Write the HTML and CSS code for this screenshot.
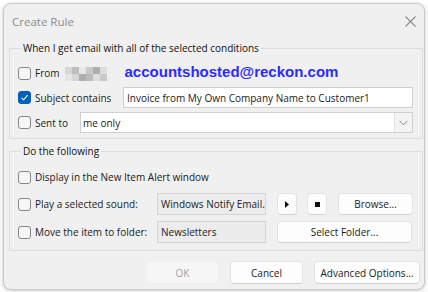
FILE: index.html
```html
<!DOCTYPE html>
<html>
<head>
<meta charset="utf-8">
<title>Create Rule</title>
<link rel="stylesheet" href="styles.css">
</head>
<body>
<div class="window">
  <div class="titlebar">
    <span class="title">Create Rule</span>
    <svg class="close" width="11" height="11" viewBox="0 0 11 11"><path d="M0.5 0.5L10.5 10.5M10.5 0.5L0.5 10.5" stroke="#8a8a8a" stroke-width="1.1" fill="none"/></svg>
  </div>

  <fieldset class="group g1">
    <legend>When I get email with all of the selected conditions</legend>
    <div class="row r-from">
      <label class="check"><span class="box"></span>From</label>
      <span class="blur">
        <i class="c1"></i><i class="c2"></i><i class="c3"></i><i class="c4"></i><i class="c5"></i><i class="c6"></i><i class="c7"></i>
        <i class="c3"></i><i class="c1"></i><i class="c5"></i><i class="c2"></i><i class="c6"></i><i class="c4"></i><i class="c7"></i>
      </span>
      <span class="email">accountshosted@reckon.com</span>
    </div>
    <div class="row r-subject">
      <label class="check lbl-subject"><span class="box checked"><svg width="9" height="9" viewBox="0 0 9 9"><path d="M1.5 4.8L3.6 6.8L7.6 2.2" stroke="#fff" stroke-width="1.1" fill="none"/></svg></span>Subject contains</label>
      <div class="textbox white wide">Invoice from My Own Company Name to Customer1</div>
    </div>
    <div class="row r-sent">
      <label class="check lbl-sent"><span class="box"></span>Sent to</label>
      <div class="combo"><span class="combo-text">me only</span><span class="drop"><svg width="9" height="6" viewBox="0 0 9 6"><path d="M0.5 0.8L4.5 4.8L8.5 0.8" stroke="#8a8a8a" stroke-width="1" fill="none"/></svg></span></div>
    </div>
  </fieldset>

  <fieldset class="group g2">
    <legend>Do the following</legend>
    <div class="row a1">
      <label class="check"><span class="box"></span>Display in the New Item Alert window</label>
    </div>
    <div class="row a2">
      <label class="check lbl-action"><span class="box"></span>Play a selected sound:</label>
      <div class="textbox grey">Windows Notify Email.</div>
      <button class="btn icon-btn"><svg width="4" height="7" viewBox="0 0 4 7"><path d="M0 0L4 3.5L0 7Z" fill="#111"/></svg></button>
      <button class="btn icon-btn"><span class="stop"></span></button>
      <button class="btn browse">Browse...</button>
    </div>
    <div class="row a3">
      <label class="check lbl-action"><span class="box"></span>Move the item to folder:</label>
      <div class="textbox grey">Newsletters</div>
      <button class="btn select-folder">Select Folder...</button>
    </div>
  </fieldset>

  <div class="footer">
    <button class="btn foot disabled">OK</button>
    <button class="btn foot">Cancel</button>
    <button class="btn foot adv">Advanced Options...</button>
  </div>
</div>
</body>
</html>
```

FILE: styles.css
```css
* { box-sizing: border-box; }

html, body {
  margin: 0;
  padding: 0;
  background: #ffffff;
  width: 428px;
  height: 292px;
  overflow: hidden;
}

body {
  font-family: "Open Sans", "Noto Sans", sans-serif;
  font-size: 10px;
  color: #1b1b1b;
  padding: 3px 0 0 3px;
}

.window {
  width: 422px;
  height: 287px;
  background: #f0f0f0;
  border: 1px solid #c9c9c9;
  border-radius: 8px;
  box-shadow: 0 1px 4px rgba(0, 0, 0, 0.22);
  display: flex;
  flex-direction: column;
  padding: 0 1px 0 5px;
}

.titlebar {
  height: 37px;
  display: flex;
  align-items: center;
  justify-content: space-between;
  padding: 0 7px 0 3px;
}

.title {
  font-size: 11.5px;
  color: #8c8c8c;
  line-height: 14px;
  margin-top: -1px;
}

.close { display: block; margin-top: -2px; }

.group {
  margin: 0;
  padding: 0 9px 0 8px;
  border: 1px solid #dcdcdc;
  border-radius: 0;
  min-width: 0;
}

.group legend {
  line-height: 14px;
  padding: 0 2px;
  margin-left: 3px;
  color: #111;
}

.g1 { padding-top: 8px; padding-bottom: 5px; }
.g2 { margin-top: 5px; padding-top: 8px; padding-bottom: 7px; }

.row {
  display: flex;
  align-items: center;
}

.r-from { height: 20px; }
.r-subject { height: 21px; margin-top: 4px; }
.r-sent { height: 21px; margin-top: 4px; }

.a1 { height: 22px; }
.a2 { height: 22px; margin-top: 5px; }
.a3 { height: 22px; margin-top: 6px; }

.check {
  display: flex;
  align-items: center;
  gap: 4px;
  white-space: nowrap;
  line-height: 14px;
}

.box {
  width: 13px;
  height: 13px;
  border: 1px solid #878787;
  border-radius: 3px;
  background: #f6f6f6;
  display: flex;
  align-items: center;
  justify-content: center;
  flex: none;
}

.box.checked {
  background: #005fb8;
  border-color: #005fb8;
}

.lbl-subject { width: 105px; }
.lbl-sent { width: 62px; }
.lbl-action { width: 139px; }

.blur {
  display: grid;
  grid-template-columns: repeat(7, 7px);
  grid-template-rows: 7px 7px;
  margin-left: 5px;
  margin-top: 1px;
}
.blur i { display: block; }
.blur .c1 { background: #d6d6d6; }
.blur .c2 { background: #bdbdbd; }
.blur .c3 { background: #e6e6e6; }
.blur .c4 { background: #c9c9c9; }
.blur .c5 { background: #aeaeae; }
.blur .c6 { background: #dedede; }
.blur .c7 { background: #efefef; }

.email {
  font-family: "Liberation Sans", Arial, sans-serif;
  font-weight: bold;
  font-size: 15px;
  color: #2b2bff;
  margin-left: 11px;
  margin-top: -3px;
  line-height: 17px;
}

.textbox {
  height: 100%;
  border: 1px solid #cfcfcf;
  display: flex;
  align-items: center;
  padding: 0 3px;
  white-space: nowrap;
  overflow: hidden;
}

.textbox.white { background: #ffffff; }
.textbox.wide { flex: 1; }

.textbox.grey {
  width: 109px;
  background: #ececec;
  border-color: #d4d4d4;
  flex: none;
}

.combo {
  flex: 1;
  height: 100%;
  background: #ffffff;
  border: 1px solid #cfcfcf;
  display: flex;
  align-items: center;
  justify-content: space-between;
}

.combo-text { padding-left: 2px; }

.drop {
  width: 18px;
  height: 100%;
  background: #f3f3f3;
  border-left: 1px solid #e2e2e2;
  display: flex;
  align-items: center;
  justify-content: center;
}

.btn {
  font-family: "Open Sans", "Noto Sans", sans-serif;
  font-size: 10px;
  color: #1b1b1b;
  background: #fdfdfd;
  border: 1px solid #e3e3e3;
  border-bottom-color: #d2d2d2;
  border-radius: 4px;
  height: 100%;
  padding: 0;
  display: flex;
  align-items: center;
  justify-content: center;
  flex: none;
}

.icon-btn { width: 20px; margin-left: 11px; }
.icon-btn + .icon-btn { margin-left: 10px; }

.stop {
  display: block;
  width: 5px;
  height: 5px;
  background: #111;
}

.browse { width: 75px; margin-left: 11px; }
.select-folder { width: 135px; margin-left: 11px; }

.footer {
  display: flex;
  justify-content: flex-end;
  gap: 11px;
  margin-top: 10px;
  height: 23px;
  padding-right: 3px;
}

.foot { width: 73px; }
.adv { width: 106px; }

.disabled {
  background: #f6f6f6;
  color: #a3a3a3;
  border-color: #efefef;
}
```
